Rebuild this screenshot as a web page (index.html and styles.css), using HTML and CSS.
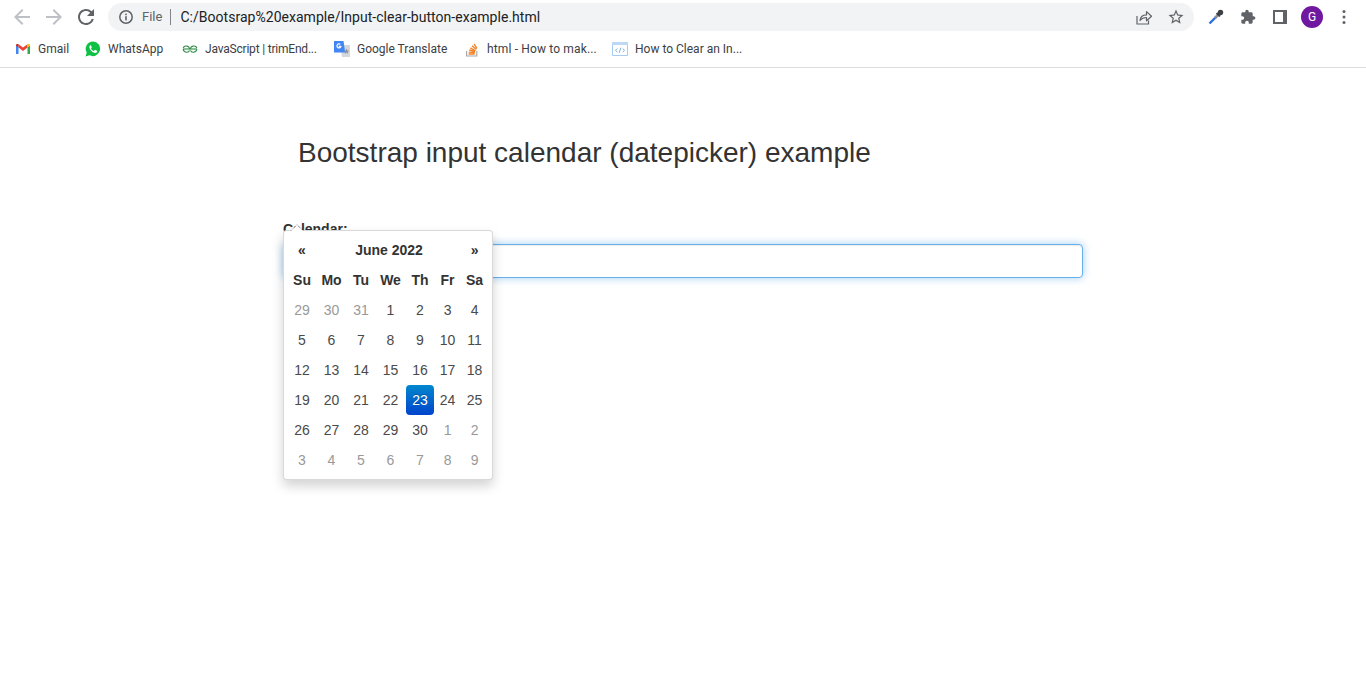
FILE: index.html
```html
<!DOCTYPE html>
<html lang="en">
<head>
    <meta charset="UTF-8">
    <meta name="viewport" content="width=device-width, initial-scale=1.0">
    <title>Bootstrap input calendar (datepicker) example</title>
    <link rel="stylesheet" href="styles.css">
</head>
<body>
    <!-- browser toolbar -->
    <div class="toolbar">
        <svg class="nav-icon faded" viewBox="0 0 24 24"><path d="M20 11H7.830l5.590-5.590L12 4l-8 8 8 8 1.410-1.410L7.830 13H20v-2z"/></svg>
        <svg class="nav-icon faded" viewBox="0 0 24 24"><path d="M12 4l-1.410 1.410L16.170 11H4v2h12.170l-5.580 5.590L12 20l8-8z"/></svg>
        <svg class="nav-icon" viewBox="0 0 24 24"><path d="M17.650 6.350A7.958 7.958 0 0 0 12 4c-4.420 0-7.990 3.580-7.990 8s3.570 8 7.990 8c3.730 0 6.840-2.550 7.730-6h-2.080A5.990 5.990 0 0 1 12 18c-3.310 0-6-2.690-6-6s2.690-6 6-6c1.660 0 3.140.69 4.220 1.780L13 11h7V4l-2.350 2.350z"/></svg>
        <div class="omnibox">
            <svg class="info-icon" viewBox="0 0 16 16"><circle cx="8" cy="8" r="6.200" fill="none" stroke="#5f6368" stroke-width="1.500"/><rect x="7.200" y="7.200" width="1.600" height="4.200" fill="#5f6368"/><rect x="7.200" y="4.600" width="1.600" height="1.600" fill="#5f6368"/></svg>
            <span class="scheme">File</span>
            <span class="divider"></span>
            <span class="url">C:/Bootsrap%20example/Input-clear-button-example.html</span>
            <svg class="share-icon" viewBox="0 0 16 16" fill="none" stroke="#5f6368" stroke-width="1.200"><path d="M1 7v8h11.500v-3.500"/><path d="M4 11.500c.4-3.600 3-5.600 6.500-5.600V2.600l5 4.700-5 4.500V8.500c-2.700 0-4.800.8-6.500 3z" stroke-linejoin="round"/></svg>
            <svg class="star-icon" viewBox="0 0 24 24"><path d="M22 9.240l-7.190-.62L12 2 9.190 8.630 2 9.240l5.460 4.730L5.820 21 12 17.270 18.180 21l-1.630-7.030L22 9.240zM12 15.400l-3.760 2.270 1-4.280-3.320-2.880 4.380-.38L12 6.100l1.710 4.040 4.380.38-3.320 2.880 1 4.280L12 15.400z"/></svg>
        </div>
        <div class="toolbar-actions">
            <svg class="action-icon dropper" viewBox="0 0 18 18" fill="none"><path d="M2.500 15.500l6-6" stroke="#2f6fdb" stroke-width="2.400"/><path d="M8 10l3.500-3.500" stroke="#8a8f96" stroke-width="2.800"/><path d="M9.600 5l3.400 3.400" stroke="#3c4043" stroke-width="2"/><circle cx="13.500" cy="4.500" r="2.700" fill="#3c4043"/></svg>
            <svg class="action-icon" viewBox="0 0 24 24"><path fill="#5f6368" d="M20.500 11H19V7c0-1.100-.9-2-2-2h-4V3.500C13 2.120 11.880 1 10.500 1S8 2.120 8 3.500V5H4c-1.100 0-1.990.9-1.990 2v3.800H3.500c1.490 0 2.700 1.210 2.700 2.700s-1.210 2.700-2.700 2.700H2V20c0 1.100.9 2 2 2h3.800v-1.500c0-1.490 1.210-2.700 2.700-2.700 1.490 0 2.700 1.210 2.700 2.700V22H17c1.100 0 2-.9 2-2v-4h1.500c1.380 0 2.500-1.120 2.500-2.500S21.880 11 20.500 11z"/></svg>
            <svg class="action-icon panel" viewBox="0 0 14 14"><path fill="#5f6368" fill-rule="evenodd" d="M0 0h14v14H0zM2 2v10h8V2z"/></svg>
            <span class="avatar">G</span>
            <svg class="menu-icon" viewBox="0 0 4 16"><circle cx="2" cy="2.500" r="1.500"/><circle cx="2" cy="8" r="1.500"/><circle cx="2" cy="13.500" r="1.500"/></svg>
        </div>
    </div>

    <!-- bookmarks -->
    <div class="bookmarks">
        <a class="bookmark">
            <svg viewBox="0 0 16 16"><path fill="#4285f4" d="M1 4v9h2.500V6.500z"/><path fill="#34a853" d="M15 4v9h-2.500V6.500z"/><path fill="#ea4335" d="M3.500 6.500V3.200L8 6.600l4.500-3.400v3.300L8 9.900z"/><path fill="#c5221f" d="M1 4.200C1 3 2.400 2.500 3.500 3.200v3.300L1 4.600z"/><path fill="#fbbc04" d="M15 4.200C15 3 13.600 2.500 12.500 3.200v3.300L15 4.600z"/></svg>
            Gmail
        </a>
        <a class="bookmark">
            <svg viewBox="0 0 16 16"><path fill="#0ec144" d="M8 .5a7.300 7.300 0 0 0-6.300 11L.6 15.400l4-1.050A7.300 7.300 0 1 0 8 .5z"/><path fill="#fff" d="M5.700 4.200c-.5 0-1.300.6-1.300 1.800 0 2.600 3 5.700 5.800 5.900 1.200 0 1.900-.8 2-1.500.1-.4 0-.6-.2-.7l-1.700-.8c-.3-.1-.4 0-.6.200l-.6.800c-.2.200-.4.200-.6.100-1-.4-1.900-1.200-2.400-2.200-.1-.2-.1-.4.100-.5l.5-.7c.1-.1.100-.3 0-.5l-.7-1.600c-.1-.3-.3-.3-.3-.3z"/></svg>
            WhatsApp
        </a>
        <a class="bookmark tight">
            <svg viewBox="0 0 16 16" fill="none" stroke="#2f8d46" stroke-width="1.100"><path d="M1 8h14"/><path d="M7.500 8C7.200 4.200 2 4.200 1.200 7M1.200 8c.3 4 5.500 4 6.300 1.400"/><path d="M8.500 8c.3-3.800 5.500-3.800 6.300-1M14.800 8c-.3 4-5.500 4-6.300 1.400"/></svg>
            JavaScript | trimEnd...
        </a>
        <a class="bookmark">
            <svg viewBox="0 0 16 16"><path fill="#d5d7da" d="M6 4h10v12H8z"/><path fill="#4285f4" d="M0 0h9.500l1.700 11.500H0z"/><path fill="none" stroke="#fff" stroke-width="1.200" d="M7 5a2 2 0 1 1-.7-1.600M4.800 5.300H7"/><path fill="#8d9096" d="M12.500 7.500l.8 1.900 1.900.1-1.500 1.300.5 2-1.700-1.100-1.700 1.100.5-2-1.500-1.300 1.900-.1z"/></svg>
            Google Translate
        </a>
        <a class="bookmark wide">
            <svg viewBox="0 0 16 16"><path fill="none" stroke="#a8a8a8" stroke-width="1.200" d="M2.600 10v5h10.200v-5"/><path fill="none" stroke="#f48024" stroke-width="1.300" d="M4.600 13h6.100M4.800 11.100l6 .6M5.300 9l5.800 1.500M6.300 6.900l5.200 2.800M8 4.700l4.300 3.700M10 2.800l2.900 4.600"/></svg>
            html - How to mak...
        </a>
        <a class="bookmark">
            <svg viewBox="0 0 16 16"><path fill="#fff" stroke="#a6cbf0" d="M.5 1.500h15v13H.5z"/><path fill="#bcd9f6" d="M0 1h16v3H0z"/><path fill="none" stroke="#7aaee0" d="M5.300 7.500L3.500 9.300l1.800 1.800M10.700 7.500l1.800 1.800-1.800 1.800M8.800 6.800l-1.600 5"/></svg>
            How to Clear an In...
        </a>
    </div>

    <div class="container">
        <h2 class="title">Bootstrap input calendar (datepicker) example</h2>
        <div class="form-group">
            <label class="field-label">Calendar:</label>
            <input class="field-input" type="text">

            <!-- popup calendar -->
            <div class="datepicker">
                <table class="calendar">
                    <colgroup><col><col><col><col><col><col><col></colgroup>
                    <thead>
                        <tr><th>«</th><th colspan="5">June 2022</th><th>»</th></tr>
                        <tr><th>Su</th><th>Mo</th><th>Tu</th><th>We</th><th>Th</th><th>Fr</th><th>Sa</th></tr>
                    </thead>
                    <tbody>
                        <tr><td class="old">29</td><td class="old">30</td><td class="old">31</td><td>1</td><td>2</td><td>3</td><td>4</td></tr>
                        <tr><td>5</td><td>6</td><td>7</td><td>8</td><td>9</td><td>10</td><td>11</td></tr>
                        <tr><td>12</td><td>13</td><td>14</td><td>15</td><td>16</td><td>17</td><td>18</td></tr>
                        <tr><td>19</td><td>20</td><td>21</td><td>22</td><td class="active">23</td><td>24</td><td>25</td></tr>
                        <tr><td>26</td><td>27</td><td>28</td><td>29</td><td>30</td><td class="old">1</td><td class="old">2</td></tr>
                        <tr><td class="old">3</td><td class="old">4</td><td class="old">5</td><td class="old">6</td><td class="old">7</td><td class="old">8</td><td class="old">9</td></tr>
                    </tbody>
                </table>
            </div>
        </div>
    </div>
</body>
</html>
```

FILE: styles.css
```css
*{
    box-sizing: border-box;
}

body{
    min-height: 100vh;
    margin: 0;
    background-color: #fff;
    color: #333;
    font-family: "Liberation Sans", Arial, sans-serif;
    font-size: 14px;
    line-height: 20px;
}

/* browser toolbar */
.toolbar{
    display: flex;
    align-items: center;
    height: 34px;
    padding: 0 0 0 10px;
    font-family: Roboto, "Noto Sans", sans-serif;
}

.nav-icon{
    width: 24px;
    height: 24px;
    margin-right: 8px;
    fill: #5f6368;
}

.nav-icon.faded{
    fill: #bdc1c6;
}

.omnibox{
    display: flex;
    align-items: center;
    flex: none;
    width: 1086px;
    height: 28px;
    margin-left: 2px;
    padding: 0 9px 0 10px;
    background-color: #f1f3f4;
    border-radius: 14px;
}

.info-icon{
    width: 16px;
    height: 16px;
}

.scheme{
    margin-left: 8px;
    color: #5f6368;
    font-size: 13px;
}

.divider{
    width: 1px;
    height: 16px;
    margin: 0 9px 0 8px;
    background-color: #80868b;
}

.url{
    flex: 1;
    color: #202124;
    font-size: 14px;
    letter-spacing: .03px;
}

.share-icon{
    width: 16px;
    height: 16px;
    margin-right: 15px;
}

.star-icon{
    width: 18px;
    height: 18px;
    fill: #5f6368;
}

.toolbar-actions{
    display: flex;
    align-items: center;
    margin-left: 14px;
}

.action-icon{
    width: 16px;
    height: 16px;
    margin-right: 16px;
}

.dropper{
    width: 18px;
    height: 18px;
    margin: 0 15px 0 -1px;
}

.panel{
    width: 14px;
    height: 14px;
    margin: 0 17px 0 1px;
}

.avatar{
    width: 22px;
    height: 22px;
    margin-left: -3px;
    background-color: #7019a0;
    border-radius: 50%;
    color: #fff;
    font-size: 12px;
    line-height: 22px;
    text-align: center;
}

.menu-icon{
    width: 4px;
    height: 16px;
    margin-left: 19px;
    fill: #5f6368;
}

/* bookmarks */
.bookmarks{
    display: grid;
    grid-template-columns: 70px 97px 152px 130px 148px auto;
    align-items: center;
    height: 34px;
    padding: 0 0 4px 15px;
    border-bottom: 1px solid #dadce0;
    font-family: Roboto, "Noto Sans", sans-serif;
    font-size: 12px;
    color: #3c4043;
}

.bookmark{
    display: flex;
    align-items: center;
    gap: 7px;
    white-space: nowrap;
}

.bookmark.tight{
    letter-spacing: -.2px;
}

.bookmark.wide{
    letter-spacing: .15px;
}

.bookmark svg{
    width: 16px;
    height: 16px;
    flex: none;
}

/* page */
.container{
    width: 800px;
    margin: 0 auto;
}

.title{
    margin: 68px 0 50px;
    padding-left: 15px;
    font-size: 28px;
    font-weight: 500;
    line-height: 33px;
}

.form-group{
    position: relative;
}

.field-label{
    display: block;
    margin-bottom: 5px;
    font-weight: bold;
}

.field-input{
    display: block;
    width: 100%;
    height: 34px;
    padding: 6px 12px;
    border: 1px solid #66afe9;
    border-radius: 4px;
    outline: 0;
    box-shadow: inset 0 1px 1px rgba(0,0,0,.075), 0 0 8px rgba(102,175,233,.6);
}

/* calendar popup */
.datepicker{
    position: absolute;
    top: 11px;
    left: 0;
    width: 210px;
    padding: 4px;
    background-color: #fff;
    border: 1px solid rgba(0,0,0,.15);
    border-radius: 4px;
    box-shadow: 0 6px 12px rgba(0,0,0,.175);
}

.datepicker:before{
    content: "";
    position: absolute;
    top: -7px;
    left: 6px;
    border-right: 7px solid transparent;
    border-bottom: 7px solid rgba(0,0,0,.2);
    border-left: 7px solid transparent;
}

.datepicker:after{
    content: "";
    position: absolute;
    top: -6px;
    left: 7px;
    border-right: 6px solid transparent;
    border-bottom: 6px solid #fff;
    border-left: 6px solid transparent;
}

.calendar{
    width: 200px;
    table-layout: fixed;
    border-collapse: collapse;
    border-spacing: 0;
}

.calendar col{
    width: 30px;
}

.calendar col:nth-child(1),
.calendar col:nth-child(2){
    width: 29px;
}

.calendar col:nth-child(5){
    width: 28px;
}

.calendar col:nth-child(6),
.calendar col:nth-child(7){
    width: 27px;
}

.calendar th,
.calendar td{
    height: 30px;
    padding: 0;
    text-align: center;
    border-radius: 4px;
}

/* first and fourth columns sit a little left of centre */
.calendar th:nth-child(1),
.calendar td:nth-child(1),
.calendar th:nth-child(4),
.calendar td:nth-child(4){
    padding-right: 1px;
}

.calendar td{
    color: #4a4a4a;
}

.calendar .old{
    color: #999;
}

.calendar .active{
    background-color: #04c;
    background-image: linear-gradient(to bottom, #08c, #04c);
    color: #fff;
    text-shadow: 0 -1px 0 rgba(0,0,0,.25);
}
```
